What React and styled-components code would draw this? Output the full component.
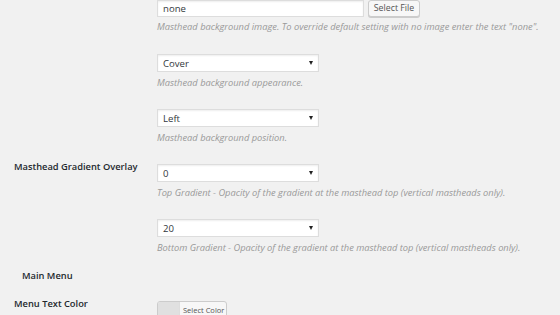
import React from "react";
import styled, { createGlobalStyle } from "styled-components";

const Global = createGlobalStyle`
  html, body { margin: 0; padding: 0; background: #f1f1f1; }
  body { font-family: "Open Sans", "Noto Sans", sans-serif; color: #23282d; overflow: hidden; }
`;

const Page = styled.div`
  width: 560px;
  height: 315px;
  overflow: hidden;
  padding-left: 14px;
  box-sizing: border-box;
`;

const Row = styled.div`
  display: grid;
  grid-template-columns: 143px 1fr;
  margin-top: ${(p) => p.$top || 0}px;
`;

const Label = styled.div`
  font-size: 9.3px;
  font-weight: 600;
  line-height: 14px;
  color: #23282d;
  white-space: nowrap;
  padding-left: ${(p) => p.$indent || 0}px;
`;

const Field = styled.div`
  display: flex;
  flex-direction: column;
  padding-top: ${(p) => p.$pad || 0}px;
`;

const Inline = styled.div`
  display: flex;
  gap: 4px;
  align-items: center;
`;

const TextInput = styled.div`
  width: 207px;
  height: 17px;
  box-sizing: border-box;
  background: #fff;
  border: 1px solid #ddd;
  box-shadow: inset 0 1px 2px rgba(0,0,0,0.07);
  font-size: 9.6px;
  line-height: 15px;
  padding-left: 5px;
  color: #32373c;
`;

const Button = styled.div`
  height: 17px;
  width: 52px;
  box-sizing: border-box;
  text-align: center;
  background: #f7f7f7;
  border: 1px solid #ccc;
  border-radius: 3px;
  box-shadow: 0 1px 0 #ccc;
  font-size: 8.8px;
  line-height: 15px;
  color: #555;
  white-space: nowrap;
`;

const Select = styled.div`
  width: 162px;
  height: 18px;
  box-sizing: border-box;
  background: #fff;
  border: 1px solid #ddd;
  box-shadow: inset 0 1px 2px rgba(0,0,0,0.07);
  display: flex;
  align-items: center;
  justify-content: space-between;
  padding: 0 5px 0 5px;
  font-size: 9.6px;
  color: #32373c;
`;

const Arrow = styled.span`
  width: 0;
  height: 0;
  border-left: 2.5px solid transparent;
  border-right: 2.5px solid transparent;
  border-top: 4px solid #222;
`;

const Desc = styled.div`
  font-size: 9.3px;
  font-style: italic;
  color: #999;
  line-height: 14px;
  margin-top: ${(p) => p.$gap ?? 4}px;
  white-space: nowrap;
`;

const Spacer = styled.div`
  height: ${(p) => p.$h}px;
`;

const ColorButton = styled.div`
  display: flex;
  align-self: flex-start;
  height: 17px;
  box-sizing: border-box;
  border: 1px solid #ccc;
  border-radius: 3px;
  overflow: hidden;
  background: #f7f7f7;
`;

const Swatch = styled.div`
  width: 21px;
  flex: none;
  background: #e0e0e0;
  border-right: 1px solid #ddd;
`;

const SwatchText = styled.div`
  font-size: 7.5px;
  line-height: 16px;
  color: #555;
  padding: 0 2px 0 3px;
  white-space: nowrap;
`;

function SelectBox({ value }) {
  return (
    <Select>
      <span>{value}</span>
      <Arrow />
    </Select>
  );
}

export default function App() {
  return (
    <>
      <Global />
      <Page>
        <Row $top={0}>
          <Label />
          <Field>
            <Inline>
              <TextInput>none</TextInput>
              <Button>Select File</Button>
            </Inline>
            <Desc $gap={3}>
              Masthead background image. To override default setting with no image enter the text "none".
            </Desc>
          </Field>
        </Row>
        <Row $top={20}>
          <Label />
          <Field>
            <SelectBox value="Cover" />
            <Desc>Masthead background appearance.</Desc>
          </Field>
        </Row>
        <Row $top={19}>
          <Label />
          <Field>
            <SelectBox value="Left" />
            <Desc>Masthead background position.</Desc>
          </Field>
        </Row>
        <Row $top={15}>
          <Label>Masthead Gradient Overlay</Label>
          <Field $pad={4}>
            <SelectBox value="0" />
            <Desc>Top Gradient - Opacity of the gradient at the masthead top (vertical mastheads only).</Desc>
            <Spacer $h={19} />
            <SelectBox value="20" />
            <Desc>Bottom Gradient - Opacity of the gradient at the masthead top (vertical mastheads only).</Desc>
          </Field>
        </Row>
        <Row $top={14}>
          <Label $indent={8}>Main Menu</Label>
        </Row>
        <Row $top={14}>
          <Label>Menu Text Color</Label>
          <Field $pad={4}>
            <ColorButton>
              <Swatch />
              <SwatchText>Select Color</SwatchText>
            </ColorButton>
          </Field>
        </Row>
      </Page>
    </>
  );
}
